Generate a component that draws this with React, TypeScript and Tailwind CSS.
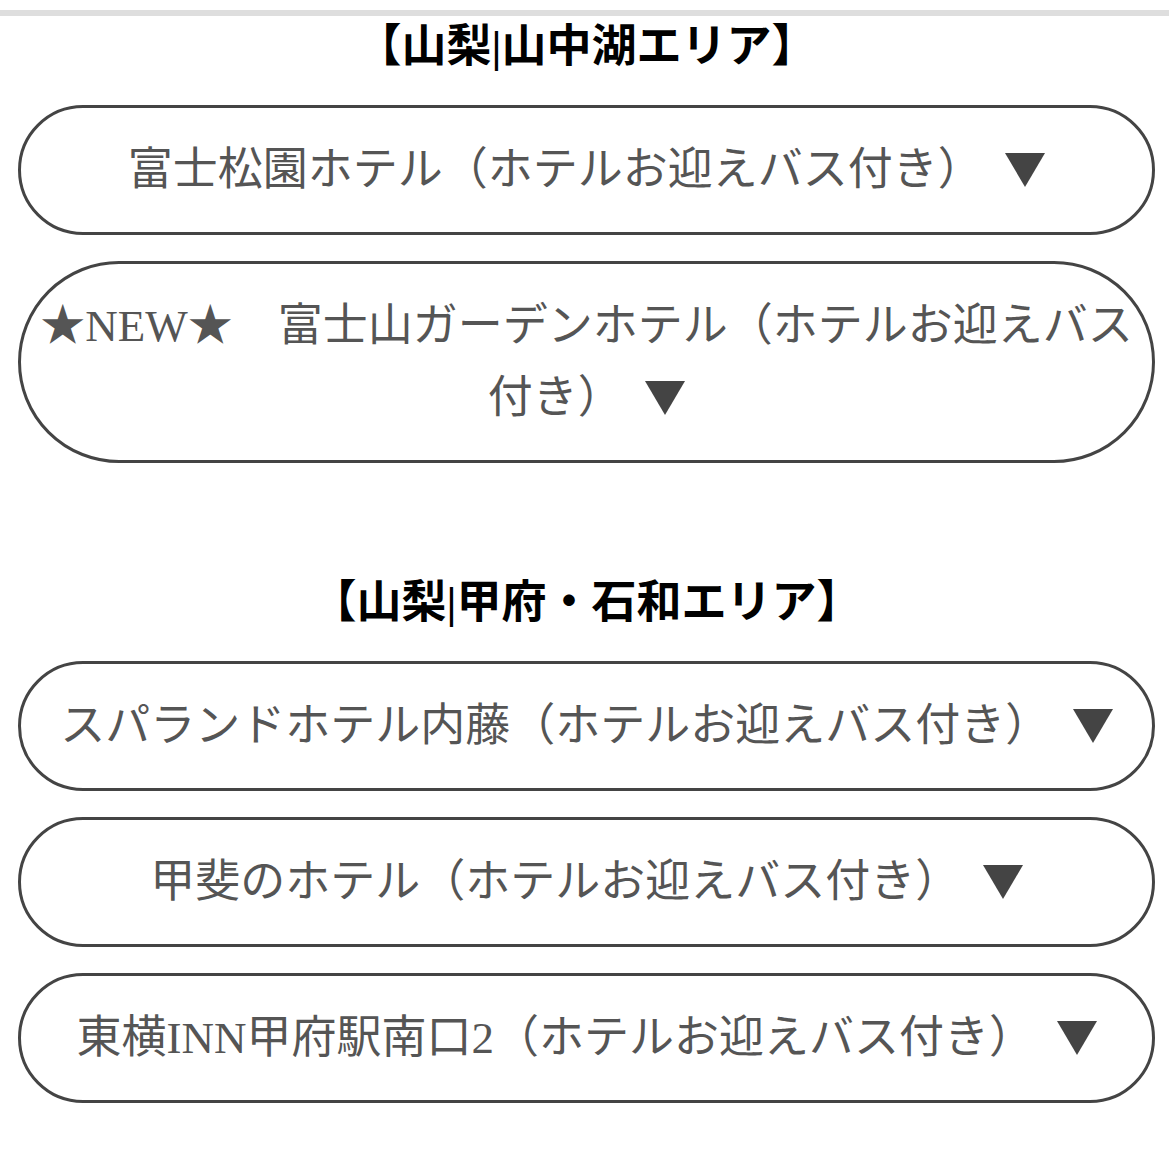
const areas = [
  {
    title: '【山梨|山中湖エリア】',
    hotels: [
      '富士松園ホテル（ホテルお迎えバス付き）',
      '★NEW★　富士山ガーデンホテル（ホテルお迎えバス付き）',
    ],
  },
  {
    title: '【山梨|甲府・石和エリア】',
    hotels: [
      'スパランドホテル内藤（ホテルお迎えバス付き）',
      '甲斐のホテル（ホテルお迎えバス付き）',
      '東横INN甲府駅南口2（ホテルお迎えバス付き）',
    ],
  },
];

function Arrow() {
  return (
    <svg
      viewBox="0 0 40 34"
      className="inline-block h-[34px] w-[40px] align-[-2px]"
      aria-hidden="true"
    >
      <path d="M0 0H40L20 34Z" fill="#444" />
    </svg>
  );
}

function HotelToggle({ name }: { name: string }) {
  return (
    <button
      type="button"
      className="block w-full rounded-full border-[3px] border-[#444] bg-white px-[16px] py-[26px] text-center text-[45px] leading-[72px] text-[#555]"
    >
      {name}　<Arrow />
    </button>
  );
}

export default function App() {
  return (
    <div
      className="min-h-[1169px] bg-white"
      style={{ fontFamily: '"Liberation Serif", "Noto Sans CJK JP", serif' }}
    >
      <div className="h-[16px] border-b-[6px] border-[#dedede]" />
      <div className="pl-[18px] pr-[14px]">
        {areas.map((area, i) => (
          <section key={area.title} className={i > 0 ? 'mt-[109px]' : ''}>
            <h2 className="mt-[-5px] mb-[22px] text-center text-[45px] font-bold leading-[72px] text-black">
              {area.title}
            </h2>
            <div className="flex flex-col gap-[26px]">
              {area.hotels.map((h) => (
                <HotelToggle key={h} name={h} />
              ))}
            </div>
          </section>
        ))}
      </div>
    </div>
  );
}
